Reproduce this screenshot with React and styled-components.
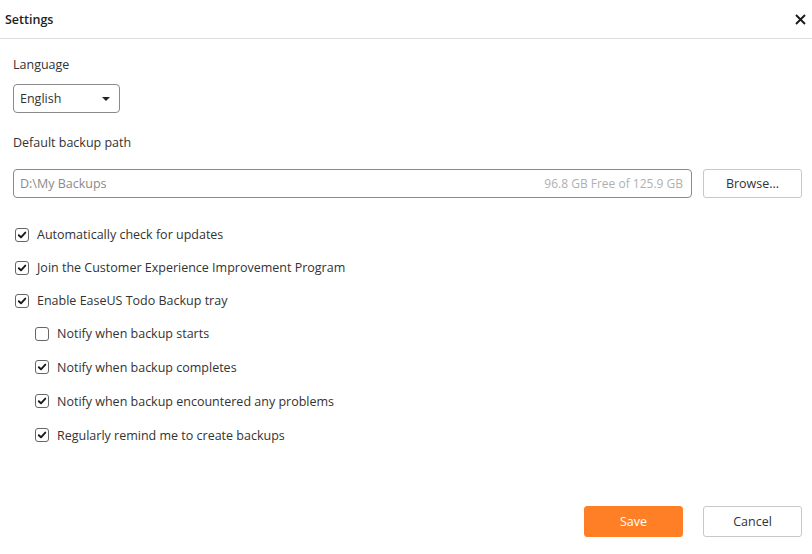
import styled, { createGlobalStyle } from 'styled-components';

const GlobalStyle = createGlobalStyle`
    html, body {
        margin: 0;
        padding: 0;
        background: #fff;
    }
    body {
        font-family: "Open Sans", "Noto Sans", sans-serif;
        color: #333;
    }
`;

const Window = styled.div`
    width: 812px;
    height: 554px;
    display: flex;
    flex-direction: column;
    background: #fff;
`;

const Header = styled.div`
    height: 39px;
    display: flex;
    align-items: center;
    justify-content: space-between;
    padding: 0 4px 0 5px;
    border-bottom: 1px solid #dedede;
    box-sizing: border-box;
`;

const Title = styled.div`
    font-size: 12.5px;
    font-weight: 600;
    color: #222;
`;

const CloseButton = styled.div`
    width: 16px;
    height: 16px;
    display: flex;
    align-items: center;
    justify-content: center;
`;

const Body = styled.div`
    flex: 1;
    display: flex;
    flex-direction: column;
    padding: 17px 10px 0 13px;
`;

const Label = styled.div`
    font-size: 12.5px;
    color: #333;
    height: 18px;
    line-height: 18px;
`;

const Select = styled.div`
    margin-top: 10px;
    width: 107px;
    height: 29px;
    box-sizing: border-box;
    border: 1px solid #8a8a8a;
    border-radius: 4px;
    display: flex;
    align-items: center;
    justify-content: space-between;
    padding: 0 9px 0 6px;
    font-size: 12.5px;
    color: #333;
`;

const Caret = styled.span`
    width: 0;
    height: 0;
    border-left: 4px solid transparent;
    border-right: 4px solid transparent;
    border-top: 4px solid #222;
`;

const Section = styled.div`
    margin-top: ${p => p.$top}px;
`;

const PathRow = styled.div`
    margin-top: 17px;
    display: flex;
    gap: 11px;
`;

const PathInput = styled.div`
    flex: 1;
    height: 29px;
    box-sizing: border-box;
    border: 1px solid #8a8a8a;
    border-radius: 4px;
    display: flex;
    align-items: center;
    justify-content: space-between;
    padding: 0 8px 0 6px;
    font-size: 12.5px;
`;

const PathText = styled.span`
    color: #8a8a8a;
`;

const FreeText = styled.span`
    color: #b0b0b0;
    font-size: 12px;
`;

const Button = styled.div`
    width: 99px;
    height: ${p => p.$h || 29}px;
    box-sizing: border-box;
    border: 1px solid ${p => (p.$primary ? '#ff7f27' : '#c8c8c8')};
    background: ${p => (p.$primary ? '#ff7f27' : '#fff')};
    color: ${p => (p.$primary ? '#fff' : '#333')};
    border-radius: 3px;
    display: flex;
    align-items: center;
    justify-content: center;
    font-size: 12.5px;
`;

const CheckList = styled.div`
    margin-top: 20px;
    display: flex;
    flex-direction: column;
`;

const CheckRow = styled.div`
    height: ${p => p.$h || 33}px;
    display: flex;
    align-items: center;
    padding-left: ${p => (p.$sub ? 22 : 2)}px;
    font-size: 12.5px;
    color: #333;
`;

const Box = styled.span`
    width: 14px;
    height: 14px;
    box-sizing: border-box;
    border: 1px solid #666;
    border-radius: 3px;
    display: inline-flex;
    align-items: center;
    justify-content: center;
    margin-right: 8px;
    flex-shrink: 0;
`;

const Footer = styled.div`
    display: flex;
    justify-content: flex-end;
    gap: 20px;
    padding: 0 10px 17px 0;
`;

const Check = ({ checked }) => (
    <Box>
        {checked && (
            <svg width="10" height="10" viewBox="0 0 10 10">
                <path d="M1.8 5.2 L4 7.3 L8.3 2.6" fill="none" stroke="#1a1a1a" strokeWidth="1.9" strokeLinecap="round" strokeLinejoin="round" />
            </svg>
        )}
    </Box>
);

const options = [
    { text: 'Automatically check for updates', checked: true },
    { text: 'Join the Customer Experience Improvement Program', checked: true },
    { text: 'Enable EaseUS Todo Backup tray', checked: true },
    { text: 'Notify when backup starts', checked: false, sub: true },
    { text: 'Notify when backup completes', checked: true, sub: true, h: 34 },
    { text: 'Notify when backup encountered any problems', checked: true, sub: true, h: 34 },
    { text: 'Regularly remind me to create backups', checked: true, sub: true, h: 34 },
];

const App = () => {
    return (
        <Window>
            <GlobalStyle />
            <Header>
                <Title>Settings</Title>
                <CloseButton>
                    <svg width="11" height="11" viewBox="0 0 11 11">
                        <path d="M1 1 L10 10 M10 1 L1 10" stroke="#1a1a1a" strokeWidth="1.9" />
                    </svg>
                </CloseButton>
            </Header>
            <Body>
                <Label>Language</Label>
                <Select>
                    English
                    <Caret />
                </Select>
                <Section $top={21}>
                    <Label>Default backup path</Label>
                </Section>
                <PathRow>
                    <PathInput>
                        <PathText>D:\My Backups</PathText>
                        <FreeText>96.8 GB Free of 125.9 GB</FreeText>
                    </PathInput>
                    <Button>Browse...</Button>
                </PathRow>
                <CheckList>
                    {options.map(o => (
                        <CheckRow key={o.text} $sub={o.sub} $h={o.h}>
                            <Check checked={o.checked} />
                            {o.text}
                        </CheckRow>
                    ))}
                </CheckList>
            </Body>
            <Footer>
                <Button $primary $h={31}>Save</Button>
                <Button $h={31}>Cancel</Button>
            </Footer>
        </Window>
    );
};

export default App;
